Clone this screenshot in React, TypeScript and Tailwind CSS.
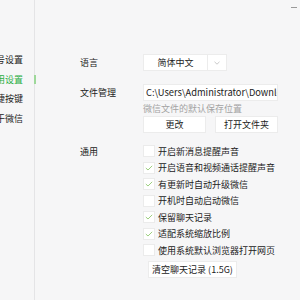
import React from 'react';

const font = { fontFamily: '"Noto Sans CJK SC", "Noto Sans", sans-serif' };

const sideItems = [
  { label: '账号设置', active: false },
  { label: '通用设置', active: true },
  { label: '快捷按键', active: false },
  { label: '关于微信', active: false },
];

const options = [
  { label: '开启新消息提醒声音', checked: false },
  { label: '开启语音和视频通话提醒声音', checked: true },
  { label: '有更新时自动升级微信', checked: true },
  { label: '开机时自动启动微信', checked: false },
  { label: '保留聊天记录', checked: true },
  { label: '适配系统缩放比例', checked: true },
  { label: '使用系统默认浏览器打开网页', checked: false },
];

function Check({ checked }: { checked: boolean }) {
  return (
    <div className="w-[12px] h-[12px] bg-white border border-[#ebebeb] flex items-center justify-center shrink-0">
      {checked && (
        <svg width="8" height="6" viewBox="0 0 8 6" fill="none">
          <path d="M0.8 3 L3 5 L7.2 0.8" stroke="#9ccf7f" strokeWidth="1" />
        </svg>
      )}
    </div>
  );
}

export default function App() {
  return (
    <div className="w-[300px] h-[300px] bg-[#f6f6f7] flex relative overflow-hidden text-[9px] text-[#222]" style={font}>
      {/* minimize mark */}
      <div className="absolute top-[7px] left-[291px] w-[6px] h-px bg-[#999]" />

      {/* Sidebar */}
      <div className="w-[35px] shrink-0 border-r border-[#e4e4e6] pt-[50px] relative">
        {sideItems.map((s) => (
          <div key={s.label} className="h-[19.5px] flex items-center relative">
            <span className={`ml-[-13px] whitespace-nowrap leading-none ${s.active ? 'text-[#2aae44]' : 'text-[#222]'}`}>
              {s.label}
            </span>
            {s.active && <div className="absolute right-[-2px] top-[5px] w-[2px] h-[9px] bg-[#9ed89a]" />}
          </div>
        ))}
      </div>

      {/* Content */}
      <div className="flex-1 pl-[45px] pt-[54px]">
        {/* Language */}
        <div className="flex items-center">
          <div className="w-[63px] leading-none">语言</div>
          <div className="w-[84px] h-[17px] bg-white border border-[#ececec] flex items-center">
            <div className="flex-1 text-center leading-none">简体中文</div>
            <div className="w-[19px] h-full border-l border-[#ececec] flex items-center justify-center">
              <svg width="6" height="4" viewBox="0 0 6 4" fill="none">
                <path d="M0.5 0.8 L3 3.2 L5.5 0.8" stroke="#bbb" strokeWidth="0.8" />
              </svg>
            </div>
          </div>
        </div>

        {/* File management */}
        <div className="flex mt-[13px]">
          <div className="w-[63px] h-[17px] flex items-center leading-none">文件管理</div>
          <div className="flex flex-col">
            <div className="w-[135px] h-[17px] bg-white border border-[#ececec] flex items-center pl-[2px] overflow-hidden whitespace-nowrap leading-none text-[9.3px]">
              C:\Users\Administrator\Downloads\WeChat Files
            </div>
            <div className="h-[15px] flex items-center text-[#a3a3a3] leading-none">微信文件的默认保存位置</div>
            <div className="flex gap-[9px]">
              <div className="w-[63px] h-[17px] bg-white border border-[#ececec] flex items-center justify-center leading-none">更改</div>
              <div className="w-[63px] h-[17px] bg-white border border-[#ececec] flex items-center justify-center leading-none">打开文件夹</div>
            </div>
          </div>
        </div>

        {/* General */}
        <div className="flex mt-[10px]">
          <div className="w-[63px] h-[16.5px] flex items-center leading-none">通用</div>
          <div className="flex flex-col">
            {options.map((o) => (
              <div key={o.label} className="h-[16.5px] flex items-center gap-[3px] whitespace-nowrap leading-none">
                <Check checked={o.checked} />
                <span>{o.label}</span>
              </div>
            ))}
            <div className="mt-[2px] ml-[5px] w-[89px] h-[17px] bg-white border border-[#ececec] flex items-center justify-center whitespace-nowrap leading-none">
              清空聊天记录 (1.5G)
            </div>
          </div>
        </div>
      </div>
    </div>
  );
}
